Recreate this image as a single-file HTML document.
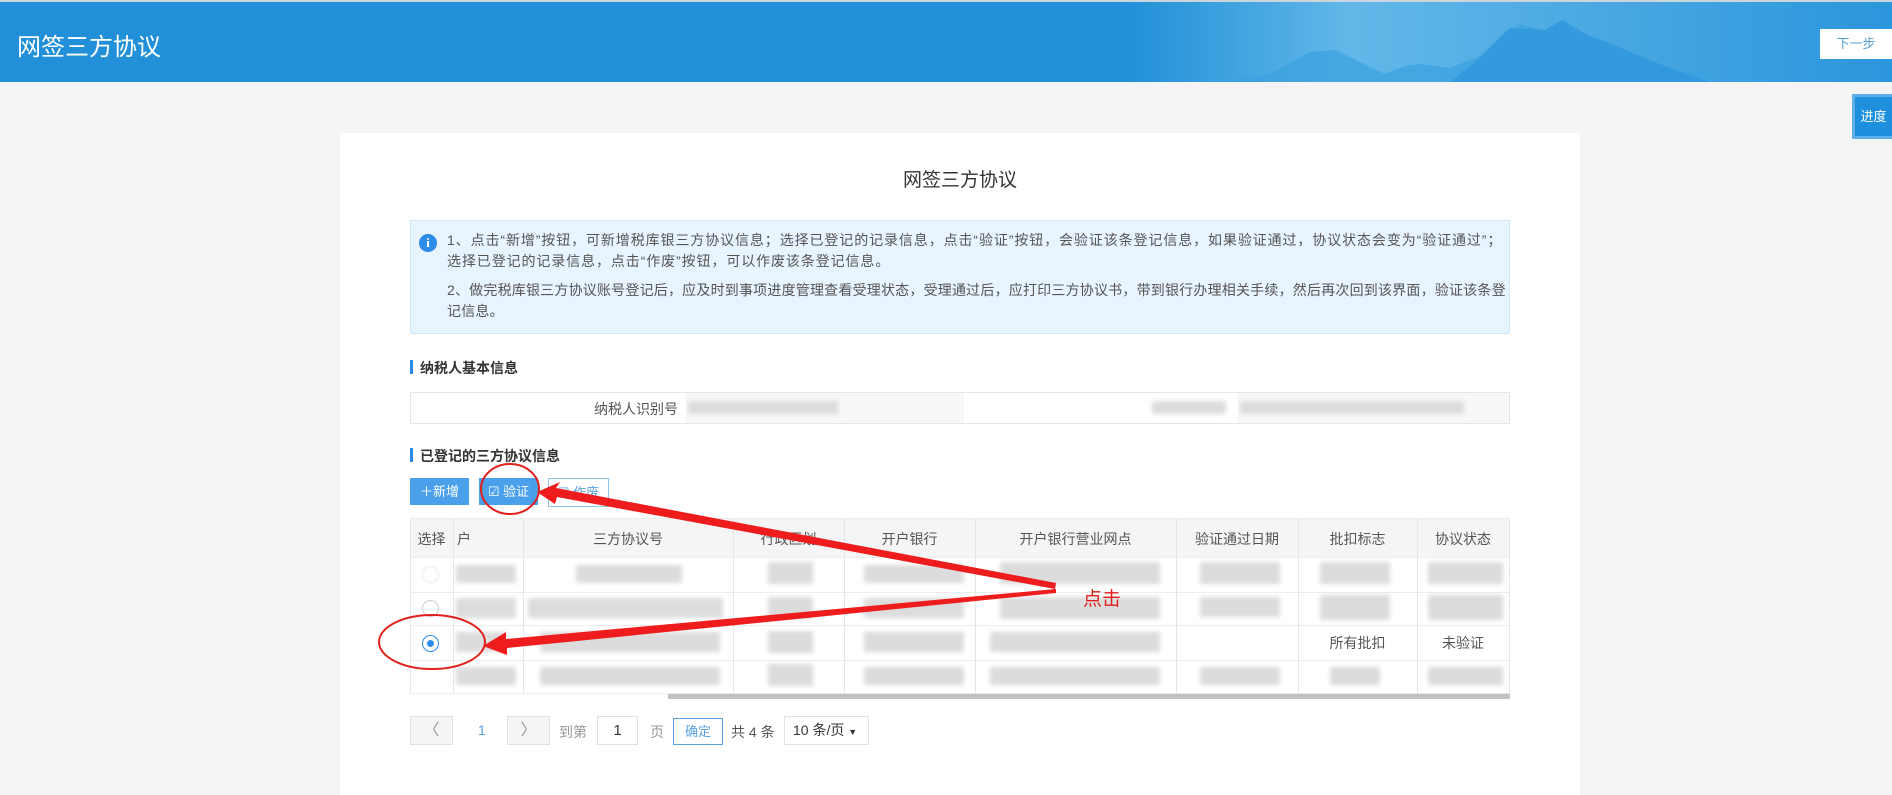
<!DOCTYPE html>
<html><head><meta charset="utf-8"><style>
*{margin:0;padding:0;box-sizing:border-box}
body{width:1892px;height:795px;overflow:hidden;background:#f4f4f5;font-family:"Liberation Sans","Noto Sans CJK SC",sans-serif;position:relative;color:#333}
.a{position:absolute}
.hdr{left:0;top:0;width:1892px;height:82px;background:linear-gradient(90deg,#2290d8 0,#2290d8 1130px,#62b8e8 1350px,#4aa8e2 1600px,#2a96dc 1892px);border-top:2px solid #c9d6de}
.blk{position:absolute;background:#dcdcdc;filter:blur(2px)}
.cell{position:absolute;font-size:14px;color:#555;text-align:center}
.vl{position:absolute;width:1px;background:#e6e6e6}
.hl{position:absolute;height:1px;background:#ececec;left:410px;width:1100px}
.info{position:absolute;left:447px;width:1062px;font-size:14px;line-height:21px;color:#555;white-space:nowrap;letter-spacing:0.9px}
</style></head><body>
<div class="a hdr">
<svg class="a" style="left:1150px;top:0" width="742" height="80" viewBox="0 0 742 80">
<path d="M60 80 L120 72 L160 50 L185 48 L210 60 L235 72 L255 64 L270 62 L300 66 L330 54 L355 30 L370 22 L400 30 L410 20 L412 18 L420 30 L460 40 L500 60 L540 70 L560 80 Z" fill="#3ba1e0" opacity="0.7"/>
<path d="M300 80 L330 56 L360 26 L395 28 L412 18 L440 34 L480 50 L520 66 L560 80Z" fill="#2f97dc" opacity="0.8"/>
</svg>
<div class="a" style="left:17px;top:25px;color:#fff;font-size:24px">网签三方协议</div>
<div class="a" style="left:1820px;top:27px;width:72px;height:30px;background:#fff;color:#5aa0d8;font-size:13px;line-height:30px;text-align:center">下一步</div>
</div>
<div class="a" style="left:1852px;top:94px;width:40px;height:45px;background:#1d8fdc;border:3px solid #5fb0ea;border-right:none;color:#fff;font-size:13px;line-height:39px;text-align:center">进度</div>

<div class="a" style="left:340px;top:133px;width:1240px;height:662px;background:#fff"></div>
<div class="a" style="left:340px;top:165px;width:1240px;text-align:center;font-size:19px;color:#333">网签三方协议</div>

<div class="a" style="left:410px;top:220px;width:1100px;height:114px;background:#e8f4ff;border:1px solid #d0e6fa"></div>
<div class="a" style="left:419px;top:234px;width:18px;height:18px;border-radius:50%;background:#2d8ce8;color:#fff;font-size:13px;line-height:18px;text-align:center;font-weight:bold;font-family:'Liberation Serif',serif">i</div>
<div class="info" style="top:230px">1、点击“新增”按钮，可新增税库银三方协议信息；选择已登记的记录信息，点击“验证”按钮，会验证该条登记信息，如果验证通过，协议状态会变为“验证通过”；<br>选择已登记的记录信息，点击“作废”按钮，可以作废该条登记信息。</div>
<div class="info" style="top:280px;letter-spacing:0.2px">2、做完税库银三方协议账号登记后，应及时到事项进度管理查看受理状态，受理通过后，应打印三方协议书，带到银行办理相关手续，然后再次回到该界面，验证该条登<br>记信息。</div>

<div class="a" style="left:410px;top:360px;width:3px;height:14px;background:#2d8ce8"></div>
<div class="a" style="left:420px;top:358px;font-size:14px;font-weight:bold;color:#333">纳税人基本信息</div>
<div class="a" style="left:410px;top:392px;width:1100px;height:32px;border:1px solid #e6e6e6"></div>
<div class="a" style="left:686px;top:393px;width:278px;height:30px;background:#f7f7f7"></div>
<div class="a" style="left:1238px;top:393px;width:271px;height:30px;background:#f7f7f7"></div>
<div class="a" style="left:560px;top:399px;width:118px;text-align:right;font-size:14px;color:#555">纳税人识别号</div>
<div class="blk" style="left:688px;top:401px;width:150px;height:13px"></div>
<div class="blk" style="left:1152px;top:401px;width:74px;height:13px"></div>
<div class="blk" style="left:1240px;top:401px;width:224px;height:13px"></div>

<div class="a" style="left:410px;top:448px;width:3px;height:14px;background:#2d8ce8"></div>
<div class="a" style="left:420px;top:446px;font-size:14px;font-weight:bold;color:#333">已登记的三方协议信息</div>
<div class="a" style="left:410px;top:478px;width:59px;height:27px;background:#4aa0ea;color:#fff;font-size:13px;line-height:27px;text-align:center">＋新增</div>
<div class="a" style="left:479px;top:478px;width:59px;height:27px;background:#4aa0ea;color:#fff;font-size:13px;line-height:27px;text-align:center">☑ 验证</div>
<div class="a" style="left:548px;top:478px;width:61px;height:29px;border:1px solid #8ec3ef;background:#fff;color:#5aa0e0;font-size:13px;line-height:27px;text-align:center">☒ 作废</div>

<div class="a" style="left:410px;top:518px;width:1100px;height:39px;background:#f5f5f5"></div>
<div class="hl" style="top:518px"></div><div class="hl" style="top:557px"></div><div class="hl" style="top:592px"></div><div class="hl" style="top:625px"></div><div class="hl" style="top:660px"></div><div class="hl" style="top:693px"></div>
<div class="vl" style="left:410px;top:518px;height:176px"></div>
<div class="vl" style="left:453px;top:518px;height:176px"></div>
<div class="vl" style="left:523px;top:518px;height:176px"></div>
<div class="vl" style="left:733px;top:518px;height:176px"></div>
<div class="vl" style="left:844px;top:518px;height:176px"></div>
<div class="vl" style="left:975px;top:518px;height:176px"></div>
<div class="vl" style="left:1176px;top:518px;height:176px"></div>
<div class="vl" style="left:1298px;top:518px;height:176px"></div>
<div class="vl" style="left:1417px;top:518px;height:176px"></div>
<div class="vl" style="left:1509px;top:518px;height:176px"></div>
<div class="cell" style="left:410px;top:529px;width:43px">选择</div>
<div class="cell" style="left:453px;top:529px;width:70px;text-align:left;padding-left:4px">户</div>
<div class="cell" style="left:523px;top:529px;width:210px">三方协议号</div>
<div class="cell" style="left:733px;top:529px;width:111px">行政区划</div>
<div class="cell" style="left:844px;top:529px;width:131px">开户银行</div>
<div class="cell" style="left:975px;top:529px;width:201px">开户银行营业网点</div>
<div class="cell" style="left:1176px;top:529px;width:122px">验证通过日期</div>
<div class="cell" style="left:1298px;top:529px;width:119px">批扣标志</div>
<div class="cell" style="left:1417px;top:529px;width:92px">协议状态</div>

<div class="blk" style="left:456px;top:565px;width:60px;height:18px"></div><div class="blk" style="left:576px;top:565px;width:106px;height:18px"></div><div class="blk" style="left:768px;top:562px;width:45px;height:22px"></div><div class="blk" style="left:864px;top:565px;width:100px;height:18px"></div><div class="blk" style="left:1000px;top:562px;width:160px;height:22px"></div><div class="blk" style="left:1200px;top:562px;width:80px;height:22px"></div><div class="blk" style="left:1320px;top:562px;width:70px;height:22px"></div><div class="blk" style="left:1428px;top:562px;width:75px;height:22px"></div>
<div class="blk" style="left:456px;top:598px;width:60px;height:20px"></div><div class="blk" style="left:528px;top:598px;width:195px;height:20px"></div><div class="blk" style="left:768px;top:597px;width:45px;height:22px"></div><div class="blk" style="left:864px;top:598px;width:100px;height:20px"></div><div class="blk" style="left:1000px;top:597px;width:160px;height:22px"></div><div class="blk" style="left:1200px;top:597px;width:80px;height:20px"></div><div class="blk" style="left:1320px;top:595px;width:70px;height:25px"></div><div class="blk" style="left:1428px;top:595px;width:75px;height:25px"></div>
<div class="blk" style="left:456px;top:632px;width:50px;height:20px"></div><div class="blk" style="left:540px;top:632px;width:180px;height:20px"></div><div class="blk" style="left:768px;top:631px;width:45px;height:22px"></div><div class="blk" style="left:864px;top:632px;width:100px;height:20px"></div><div class="blk" style="left:990px;top:632px;width:170px;height:20px"></div>
<div class="blk" style="left:456px;top:667px;width:60px;height:18px"></div><div class="blk" style="left:540px;top:667px;width:180px;height:18px"></div><div class="blk" style="left:768px;top:664px;width:45px;height:22px"></div><div class="blk" style="left:864px;top:667px;width:100px;height:18px"></div><div class="blk" style="left:990px;top:667px;width:170px;height:18px"></div><div class="blk" style="left:1200px;top:667px;width:80px;height:18px"></div><div class="blk" style="left:1330px;top:667px;width:50px;height:18px"></div><div class="blk" style="left:1428px;top:667px;width:75px;height:18px"></div>
<div class="a" style="left:422px;top:566px;width:17px;height:17px;border-radius:50%;border:1px solid #e4e4e4;filter:blur(1px)"></div>
<div class="a" style="left:422px;top:600px;width:17px;height:17px;border-radius:50%;border:1px solid #ccc"></div>
<div class="a" style="left:422px;top:635px;width:17px;height:17px;border-radius:50%;border:1px solid #2d8ce8;background:#fff"></div>
<div class="a" style="left:427px;top:640px;width:7px;height:7px;border-radius:50%;background:#2d8ce8"></div>
<div class="cell" style="left:1298px;top:633px;width:119px">所有批扣</div>
<div class="cell" style="left:1417px;top:633px;width:92px">未验证</div>
<div class="a" style="left:668px;top:694px;width:842px;height:5px;background:#c1c1c1"></div>

<div class="a" style="left:410px;top:716px;width:43px;height:29px;border:1px solid #e2e2e2;background:#f5f5f5;color:#999;text-align:center;line-height:27px;font-size:16px">〈</div>
<div class="a" style="left:478px;top:722px;color:#5aa0e0;font-size:14px">1</div>
<div class="a" style="left:507px;top:716px;width:43px;height:29px;border:1px solid #e2e2e2;background:#f5f5f5;color:#999;text-align:center;line-height:27px;font-size:16px">〉</div>
<div class="a" style="left:559px;top:722px;color:#999;font-size:14px">到第</div>
<div class="a" style="left:597px;top:716px;width:41px;height:29px;border:1px solid #e2e2e2;text-align:center;line-height:27px;font-size:15px">1</div>
<div class="a" style="left:650px;top:722px;color:#999;font-size:14px">页</div>
<div class="a" style="left:673px;top:718px;width:50px;height:27px;border:1px solid #5aa0e0;color:#5aa0e0;text-align:center;line-height:25px;font-size:13px">确定</div>
<div class="a" style="left:731px;top:722px;color:#555;font-size:14px">共 4 条</div>
<div class="a" style="left:784px;top:716px;width:85px;height:29px;border:1px solid #e2e2e2;line-height:27px;font-size:14px;padding-left:8px;color:#333">10 条/页 <span style="font-size:9px">▼</span></div>

<svg class="a" style="left:0;top:0" width="1892" height="795">
<ellipse cx="510" cy="489" rx="29" ry="25" fill="none" stroke="#e0201c" stroke-width="2"/>
<ellipse cx="432" cy="642" rx="53" ry="27" fill="none" stroke="#e0201c" stroke-width="2"/>
<polygon points="1056,583 556,488 560,482 537,492 555,504 557,497 1055,589" fill="#ee1c1c"/>
<polygon points="1056,589 506,639 506,632 483,646 507,655 507,648 1056,593" fill="#ee1c1c"/>
<text x="1083" y="605" font-size="19" fill="#e0201c" font-family="Liberation Sans,Noto Sans CJK SC,sans-serif">点击</text>
</svg>
</body></html>
